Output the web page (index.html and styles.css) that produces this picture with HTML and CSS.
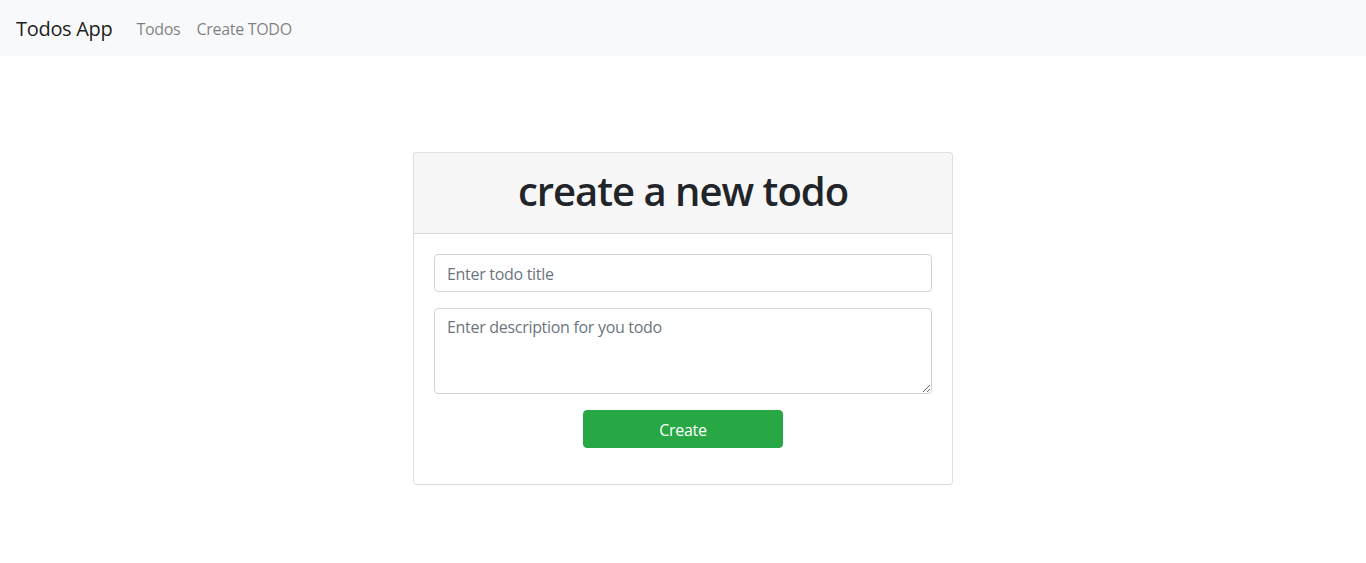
FILE: index.html
```html
<!DOCTYPE html>
<html lang="en">
<head>
<meta charset="utf-8">
<title>Todos App</title>
<link rel="stylesheet" href="styles.css">
</head>
<body>
<nav class="navbar">
  <a class="brand" href="#">Todos App</a>
  <ul class="nav">
    <li><a class="nav-link" href="#">Todos</a></li>
    <li><a class="nav-link" href="#">Create TODO</a></li>
  </ul>
</nav>
<main class="container">
  <div class="card">
    <div class="card-header">
      <h1>create a new todo</h1>
    </div>
    <form class="card-body">
      <div class="form-group">
        <input class="form-control" type="text" placeholder="Enter todo title">
      </div>
      <div class="form-group">
        <textarea class="form-control" rows="3" placeholder="Enter description for you todo"></textarea>
      </div>
      <div class="form-group center">
        <button class="btn" type="button">Create</button>
      </div>
    </form>
  </div>
</main>
</body>
</html>
```
FILE: styles.css
```css
* { box-sizing: border-box; }
html, body { margin: 0; }
body {
  font-family: "Open Sans", "Noto Sans", sans-serif;
  font-size: 16px;
  line-height: 1.5;
  letter-spacing: -0.3px;
  color: #212529;
  background: #fff;
}
.navbar {
  display: flex;
  align-items: center;
  height: 56px;
  padding: 8px 16px;
  background: #f8f9fa;
}
.brand {
  font-size: 20px;
  line-height: 30px;
  color: rgba(0,0,0,.9);
  text-decoration: none;
  margin-right: 16px;
  padding: 6px 0 4px;
}
.nav {
  display: flex;
  list-style: none;
  margin: 0;
  padding: 0;
}
.nav-link {
  display: block;
  padding: 9px 8px 7px;
  color: rgba(0,0,0,.5);
  text-decoration: none;
}
.container {
  width: 540px;
  margin: 96px auto 0;
}
.card {
  border: 1px solid rgba(0,0,0,.125);
  border-radius: 4px;
  background: #fff;
}
.card-header {
  padding: 12px 20px;
  background: rgba(0,0,0,.03);
  border-bottom: 1px solid rgba(0,0,0,.125);
  text-align: center;
}
.card-header h1 {
  margin: 0 0 8px;
  font-size: 40px;
  line-height: 1.2;
  font-weight: 600;
  letter-spacing: -1px;
  padding-top: 2px;
  height: 48px;
}
.card-body {
  padding: 20px;
  margin: 0;
}
.form-group { margin-bottom: 16px; }
.center { display: flex; justify-content: center; }
.form-control {
  display: block;
  width: 100%;
  height: 38px;
  padding: 7px 12px 5px;
  font: inherit;
  line-height: 1.5;
  letter-spacing: inherit;
  color: #495057;
  border: 1px solid #ced4da;
  border-radius: 4px;
  background: #fff;
}
textarea.form-control { height: 86px; resize: vertical; padding-top: 6px; }
.form-control::placeholder { color: #6c757d; opacity: 1; }
.btn {
  width: 200px;
  height: 38px;
  font: inherit;
  letter-spacing: inherit;
  color: #fff;
  background: #28a745;
  border: 1px solid #28a745;
  border-radius: 4px;
  padding: 7px 12px 5px;
}
```
